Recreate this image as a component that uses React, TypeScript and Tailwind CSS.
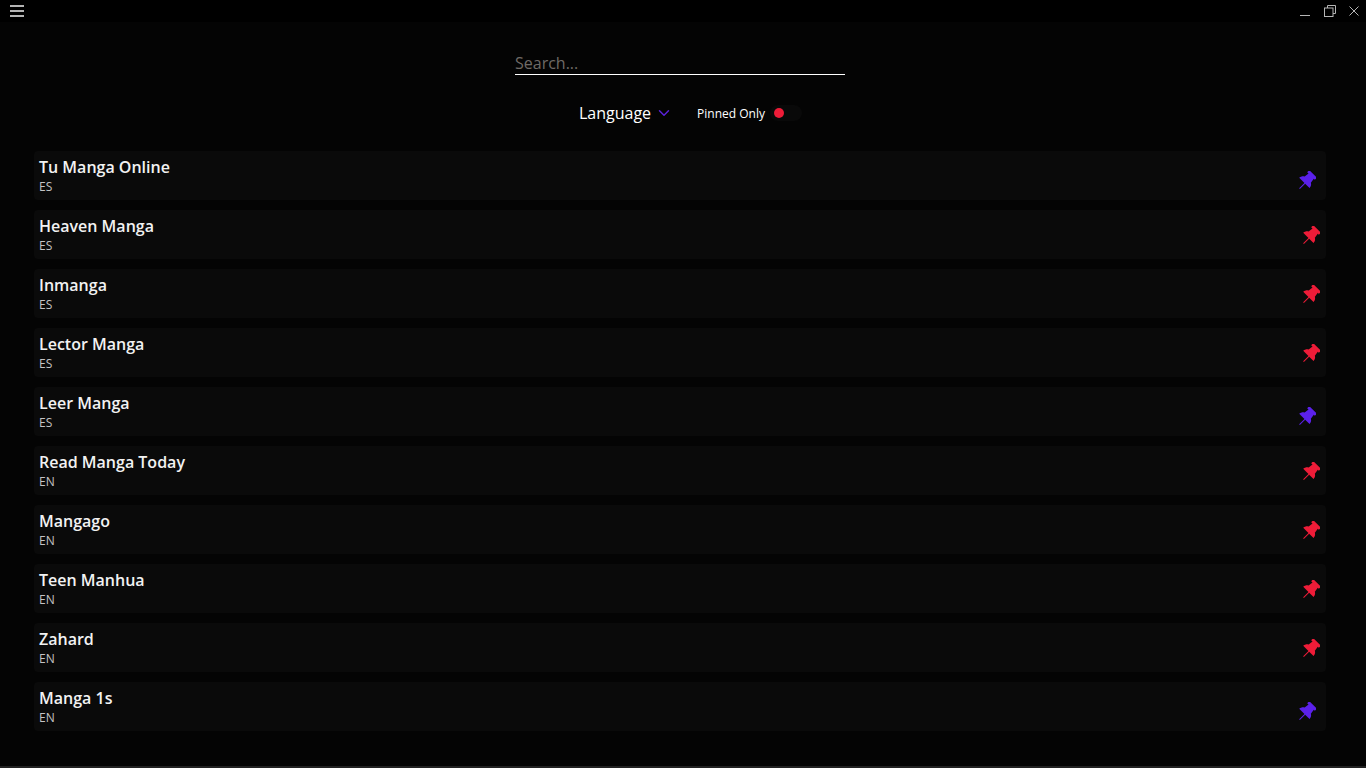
import { ChevronDown } from "lucide-react";

const sources = [
  { name: "Tu Manga Online", lang: "ES", pinned: true },
  { name: "Heaven Manga", lang: "ES", pinned: false },
  { name: "Inmanga", lang: "ES", pinned: false },
  { name: "Lector Manga", lang: "ES", pinned: false },
  { name: "Leer Manga", lang: "ES", pinned: true },
  { name: "Read Manga Today", lang: "EN", pinned: false },
  { name: "Mangago", lang: "EN", pinned: false },
  { name: "Teen Manhua", lang: "EN", pinned: false },
  { name: "Zahard", lang: "EN", pinned: false },
  { name: "Manga 1s", lang: "EN", pinned: true },
];

function Pin({ className }: { className: string }) {
  return (
    <svg viewBox="0 0 24 24" fill="currentColor" className={className}>
      <path
        transform="rotate(45 12 12)"
        d="M5.500 0h13v3.500h-1.800l.8 5.800c2 1 3.300 2.900 3.500 5.700h-7.400v9h-1.200v-9H3.500c.2-2.800 1.500-4.700 3.500-5.700l.8-5.800H5.500z"
      />
    </svg>
  );
}

export default function App() {
  return (
    <div className="h-[768px] overflow-hidden bg-[#040404] font-['Open_Sans',sans-serif] text-white flex flex-col border-b-2 border-[#222222]">
      {/* Title bar */}
      <div className="h-[22px] bg-black flex items-center justify-between shrink-0">
        <div className="ml-[10px] w-[14px] h-[14px] mt-[-1px] flex flex-col justify-between py-px">
          <div className="h-[2px] bg-[#b4b4b4]" />
          <div className="h-[2px] bg-[#b4b4b4]" />
          <div className="h-[2px] bg-[#b4b4b4]" />
        </div>
        <div className="flex items-center text-[#b5b5b5]">
          <svg width="10" height="10" viewBox="0 0 10 10" className="mr-[14px] mt-[3px]">
            <path d="M0 7.5h10" stroke="currentColor" strokeWidth="1" />
          </svg>
          <svg width="12" height="12" viewBox="0 0 12 12" className="mr-[13px]" fill="none">
            <path d="M3.5 3V.5h8v8H9" stroke="currentColor" />
            <rect x="0.5" y="3" width="8.500" height="8.500" stroke="currentColor" />
          </svg>
          <svg width="10" height="10" viewBox="0 0 10 10" className="mr-[7px]" fill="none">
            <path d="M.5.5l9 9M9.5.5l-9 9" stroke="currentColor" />
          </svg>
        </div>
      </div>

      {/* Filters */}
      <div className="flex flex-col items-center shrink-0">
        <div className="w-[330px] mt-[29px] mr-[6px] h-[24px] border-b border-white text-[16px] leading-[24px] text-[#6f6a66]">
          Search...
        </div>
        <div className="flex items-center h-[26px] mt-[25px] ml-[15px]">
          <span className="text-[16px] text-white">Language</span>
          <ChevronDown className="w-[18px] h-[18px] ml-[4px] text-[#5a22d8]" strokeWidth={2} />
          <span className="ml-[24px] mt-[2px] text-[12px] text-white">Pinned Only</span>
          <div className="ml-[5px] w-[32px] h-[16px] rounded-full bg-[#090909] flex items-center pl-[4px]">
            <div className="w-[10px] h-[10px] rounded-full bg-[#ee1c38]" />
          </div>
        </div>
      </div>

      {/* Source list */}
      <div className="mt-[25px] mx-[34px] w-[1292px] flex flex-col gap-[10px]">
        {sources.map((source) => (
          <div
            key={source.name}
            className="h-[49px] rounded bg-[#0a0a0a] flex justify-between pl-[5px] pt-[3px]"
          >
            <div>
              <div className="text-[16px] leading-[26px] font-semibold text-[#f2f2f2]">{source.name}</div>
              <div className="text-[12px] leading-[14px] text-[#c4c4c4]">{source.lang}</div>
            </div>
            {source.pinned ? (
              <Pin className="w-[20px] h-[20px] mt-[17px] mr-[10px] text-[#5b21ea]" />
            ) : (
              <Pin className="w-[20px] h-[20px] mt-[13px] mr-[6px] text-[#ee1c38]" />
            )}
          </div>
        ))}
      </div>
    </div>
  );
}
